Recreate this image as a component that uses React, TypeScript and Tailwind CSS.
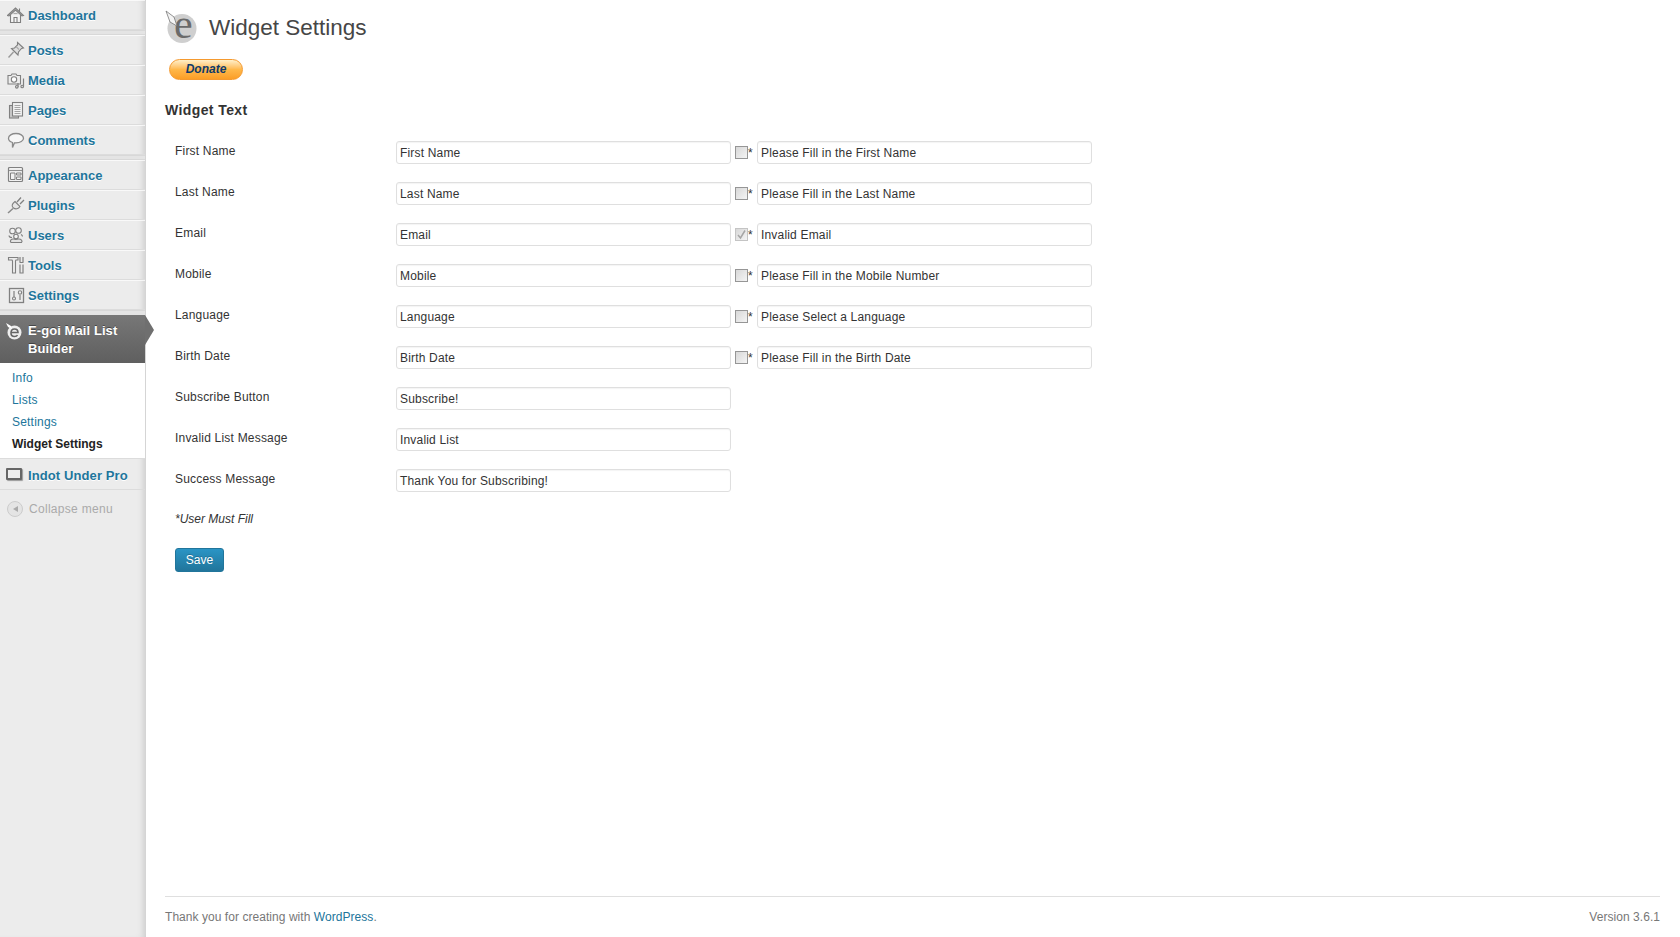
import React from "react";

const G = "#808080";

function Ic({ children }: { children: React.ReactNode }) {
  return (
    <svg width="18" height="18" viewBox="0 0 18 18" fill="none" stroke={G} strokeWidth="1.1" className="shrink-0">
      {children}
    </svg>
  );
}

const icons: Record<string, React.ReactNode> = {
  Dashboard: (
    <Ic>
      <path d="M.5 9.500 8.500 2l8 7.500-1.500.5-6.500-6-6.500 6Z" fill="#cfcfcf" />
      <path d="M3.500 9v7.500h10V9" fill="#f4f4f4" />
      <path d="M7 16.500v-5h3v5M12.500 2.500V6" />
      <path d="M6.500 7.500h4" stroke="#aaa" />
    </Ic>
  ),
  Posts: (
    <Ic>
      <path d="M10.500 1.500 16.500 7l-2 .5-3 3.500-.5 3L4.500 7.500l3-.5 3-3Z" fill="#dedede" />
      <path d="M6.500 11 1.500 16.500" strokeWidth="1.400" stroke="#999" />
      <path d="M9 5.500l3 3" stroke="#aaa" />
    </Ic>
  ),
  Media: (
    <Ic>
      <path d="M1 4.500h3l1-1.500h4l1 1.500h3.500v8.500H1Z" fill="#ededed" />
      <circle cx="7" cy="8.500" r="2.700" fill="#fff" />
      <path d="M11 12v4M16.500 7.500V15.500" strokeWidth="1.200" />
      <circle cx="9.800" cy="15.800" r="1.300" fill="#ddd" />
      <circle cx="15.200" cy="15.500" r="1.300" fill="#ddd" />
    </Ic>
  ),
  Pages: (
    <Ic>
      <rect x="2.500" y="4.500" width="9" height="12.500" fill="#c9c9c9" />
      <rect x="5.500" y="1.500" width="10" height="13.500" fill="#f2f2f2" />
      <path d="M7.500 4.500h6M7.500 6.500h6M7.500 8.500h6M7.500 10.500h6M7.500 12.500h6" stroke="#a5a5a5" />
    </Ic>
  ),
  Comments: (
    <Ic>
      <path d="M9 2.500c4.200 0 7.500 2 7.500 4.700s-3.300 4.600-7.500 4.600h-1.500L5.500 16.500v-5C3 10.700 1.500 9.200 1.500 7.200 1.500 4.500 4.800 2.500 9 2.500Z" fill="#f7f7f7" stroke="#8a8a8a" strokeWidth="1.300" />
    </Ic>
  ),
  Appearance: (
    <Ic>
      <rect x="1.500" y="1.500" width="14" height="14" rx="1" fill="#f2f2f2" strokeWidth="1.200" />
      <path d="M2 4.500h13" stroke="#8f8f8f" />
      <path d="M3.500 7h4.500v6.500H3.500ZM9.500 7h4.500v2h-4.500ZM9.500 11h4.500v2.500h-4.500Z" strokeWidth="1" />
    </Ic>
  ),
  Plugins: (
    <Ic>
      <path d="M8 5.500 13 10.500c-1.500 2.500-4.500 3-6.500 1.500S4.500 8 8 5.500Z" fill="#e6e6e6" />
      <path d="M10 6 14 1.500M13 8 17 4" strokeWidth="1.300" />
      <path d="M6 12.500 1 17" strokeWidth="1.500" stroke="#8a8a8a" />
    </Ic>
  ),
  Users: (
    <Ic>
      <circle cx="5.500" cy="5" r="2.800" fill="#f2f2f2" />
      <circle cx="11.500" cy="4.500" r="2.800" fill="#f2f2f2" />
      <path d="M2 9.500c0 1 1 2 3 2M14 8.500c1 .5 1.500 1 1.500 2" />
      <circle cx="9" cy="10.500" r="2.300" fill="#f5f5f5" />
      <path d="M4 16.500c-1.500-1.500 0-3.700 2.500-3.500 1.500.5 3 .5 5 0 2.500-.2 4.500 2 3 3.500Z" fill="#e2e2e2" />
    </Ic>
  ),
  Tools: (
    <Ic>
      <path d="M1.500 1.500h9.500v2.500H9l-.5 1v12h-3V5L5 4H1.500Z" fill="#ececec" />
      <path d="M13 1v5M16 1v5M12.500 6.500h4M13 8.500v8.500h3V8.500" strokeWidth="1.200" />
    </Ic>
  ),
  Settings: (
    <Ic>
      <rect x="2.500" y="2.500" width="14" height="14" strokeWidth="1.300" />
      <path d="M7 5v6M13 9v5" strokeWidth="1.200" />
      <circle cx="7" cy="12.500" r="1.500" />
      <circle cx="13" cy="6.500" r="1.700" />
    </Ic>
  ),
};

const topMenu = ["Dashboard"];
const contentMenu = ["Posts", "Media", "Pages", "Comments"];
const adminMenu = ["Appearance", "Plugins", "Users", "Tools", "Settings"];

function MenuItem({ name }: { name: string }) {
  return (
    <a className="flex h-[30px] items-center gap-[3px] border-t border-b border-t-white/70 border-b-[#dcdcdc] pl-[7px] text-[13px] font-bold text-[#21759b] [text-shadow:0_1px_0_#fff]">
      {icons[name]}
      <span className="pt-[2px]">{name}</span>
    </a>
  );
}

function Separator() {
  return <div className="h-[5px] border-y border-y-[#d8d8d8] bg-[#e4e4e4]" />;
}

const rows = [
  { label: "First Name", value: "First Name", error: "Please Fill in the First Name" },
  { label: "Last Name", value: "Last Name", error: "Please Fill in the Last Name" },
  { label: "Email", value: "Email", error: "Invalid Email", checked: true },
  { label: "Mobile", value: "Mobile", error: "Please Fill in the Mobile Number" },
  { label: "Language", value: "Language", error: "Please Select a Language" },
  { label: "Birth Date", value: "Birth Date", error: "Please Fill in the Birth Date" },
  { label: "Subscribe Button", value: "Subscribe!" },
  { label: "Invalid List Message", value: "Invalid List" },
  { label: "Success Message", value: "Thank You for Subscribing!" },
];

function Field({ value }: { value: string }) {
  return (
    <div className="flex h-[23px] w-[335px] items-center rounded-[3px] border border-[#dfdfdf] bg-white pl-[3px] text-[12px] tracking-[0.18px] text-[#333] [box-shadow:inset_0_1px_1px_#f4f4f4]">
      {value}
    </div>
  );
}

function Check({ checked }: { checked?: boolean }) {
  return (
    <div className={`flex h-[13px] w-[13px] items-center justify-center border-[1.5px] bg-gradient-to-br from-[#d8d8d8] to-[#f4f4f4] ${checked ? "border-[#c4c4c4]" : "border-[#969696]"}`}>
      {checked && (
        <svg width="11" height="11" viewBox="0 0 11 11" fill="none" stroke="#a5a5a5" strokeWidth="1.500">
          <path d="M2 6 4.500 9 9 1.500" />
        </svg>
      )}
    </div>
  );
}

export default function App() {
  return (
    <div className="flex h-[937px] w-[1680px] overflow-hidden bg-white font-['Liberation_Sans',Arial,sans-serif] text-[12px] text-[#333]">
      {/* Sidebar */}
      <div className="w-[146px] shrink-0 bg-[#ececec] [box-shadow:inset_-7px_0_7px_-5px_#c8c8c8]">
        <div className="w-[145px]">
          {topMenu.map((m) => <MenuItem key={m} name={m} />)}
          <Separator />
          {contentMenu.map((m) => <MenuItem key={m} name={m} />)}
          <Separator />
          {adminMenu.map((m) => <MenuItem key={m} name={m} />)}
          <div className="h-[5px] border-t border-t-[#d8d8d8] bg-[#e4e4e4]" />

          {/* Current item */}
          <div className="relative flex h-[48px] bg-gradient-to-b from-[#777] to-[#5f5f5f] pl-[6px] pt-[7px] text-[13px] leading-[18px] font-bold tracking-[0.08px] text-white [text-shadow:0_-1px_0_rgba(0,0,0,0.4)]">
            <svg width="17" height="17" viewBox="0 0 17 17" className="mt-[1px] mr-[5px] shrink-0">
              <circle cx="8.500" cy="9.500" r="7" fill="#eee" />
              <path d="M5 9.500h7c0-2-1.500-3.500-3.500-3.500S5 7.500 5 10s1.500 3.500 3.500 3.500c1.500 0 2.500-.5 3-1.500" fill="none" stroke="#666" strokeWidth="1.600" />
              <path d="M0 0 5 3 6 6 2 4Z" fill="#fff" />
            </svg>
            <span className="w-[105px]">E-goi Mail List Builder</span>
            <div className="absolute top-0 left-full h-0 w-0 border-y-[15px] border-l-[9px] border-y-transparent border-l-[#6f6f6f]" />
          </div>
          <div className="flex h-[96px] flex-col border-b border-b-[#dcdcdc] bg-white pt-[4px] pl-[12px] text-[12px] tracking-[0.2px] text-[#21759b]">
            <a className="flex h-[22px] items-center">Info</a>
            <a className="flex h-[22px] items-center">Lists</a>
            <a className="flex h-[22px] items-center">Settings</a>
            <a className="flex h-[22px] items-center font-bold tracking-normal text-[#222]">Widget Settings</a>
          </div>

          <a className="flex h-[31px] items-center border-b border-b-[#dcdcdc] pt-[3px] pl-[6px] text-[13px] font-bold tracking-[0.1px] text-[#21759b] [text-shadow:0_1px_0_#fff]">
            <span className="mt-[-3px] mr-[6px] h-[12px] w-[16px] rounded-[1px] border-[2px] border-[#666] bg-[#eee] [box-shadow:1px_1px_1px_#999]" />
            Indot Under Pro
          </a>
          <div className="flex h-[37px] items-center gap-[6px] pl-[7px] text-[12px] tracking-[0.3px] text-[#aaa]">
            <span className="flex h-[16px] w-[16px] items-center justify-center rounded-full border border-[#ccc] bg-[#e4e4e4]">
              <span className="h-0 w-0 border-y-[3.5px] border-r-[5px] border-y-transparent border-r-[#aaa]" />
            </span>
            Collapse menu
          </div>
        </div>
      </div>

      {/* Content */}
      <div className="flex min-w-0 flex-1 flex-col pr-[20px] pl-[19px]">
        <div className="flex h-[56px] items-start pt-[11px]">
          <svg width="32" height="32" viewBox="0 0 32 32" className="mr-[12px] shrink-0 overflow-visible">
            <circle cx="17" cy="17.500" r="14.500" fill="#cfcfcf" />
            <text x="9" y="27" fontSize="42" fontFamily="'Liberation Serif', serif" fill="#6a6a6a">e</text>
            <path d="M1 0 9 6 12 15 5 11Z" fill="#f4f4f4" stroke="#777" strokeWidth="0.800" />
          </svg>
          <h2 className="mt-[2px] text-[22.5px] leading-[29px] text-[#464646]">Widget Settings</h2>
        </div>

        <div className="mt-[3px] ml-[4px] flex h-[21px] w-[74px] items-center justify-center rounded-full border border-[#f59a2f] bg-gradient-to-b from-[#ffefc8] via-[#ffb84a] to-[#fb9e25] pb-[2px] text-[12px] leading-none font-bold text-[#0e3a6b] italic">
          Donate
        </div>

        <h3 className="mt-[21px] text-[14px] leading-[18px] font-bold tracking-[0.4px] text-[#333]">Widget Text</h3>

        <div className="mt-[22px] flex flex-col gap-[18px] pl-[10px]">
          {rows.map((r) => (
            <div key={r.label} className="flex h-[23px] items-center">
              <div className="mt-[-4px] w-[221px] shrink-0 tracking-[0.2px]">{r.label}</div>
              <Field value={r.value} />
              {r.error && (
                <>
                  <div className="ml-[4px] flex w-[22px] shrink-0 items-center">
                    <Check checked={r.checked} />
                    <span>*</span>
                  </div>
                  <Field value={r.error} />
                </>
              )}
            </div>
          ))}
        </div>

        <div className="mt-[20px] pl-[10px] leading-[15px] italic">*User Must Fill</div>

        <button className="mt-[21px] ml-[10px] flex h-[24px] w-[49px] items-center justify-center rounded-[3px] border border-[#21759b] bg-gradient-to-b from-[#2a95c5] to-[#21759b] text-[12px] text-white [text-shadow:0_-1px_0_rgba(0,0,0,0.2)]">
          Save
        </button>

        <div className="mt-auto flex h-[41px] items-center justify-between border-t border-t-[#dfdfdf] text-[12px] tracking-[0.05px] text-[#777]">
          <span>
            Thank you for creating with <a className="text-[#21759b]">WordPress</a>.
          </span>
          <span>Version 3.6.1</span>
        </div>
      </div>
    </div>
  );
}
